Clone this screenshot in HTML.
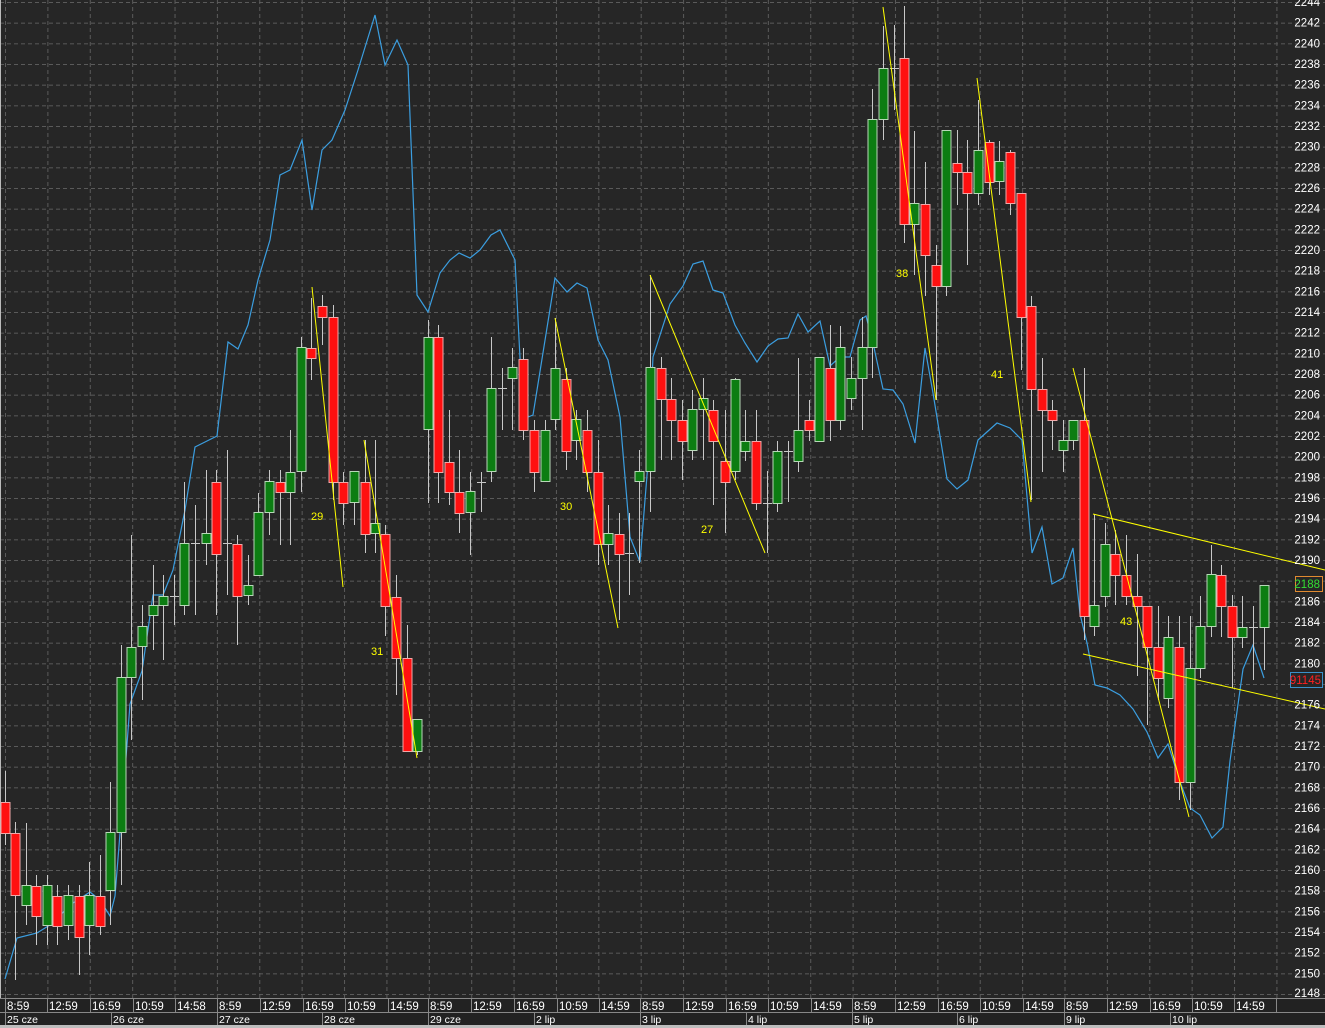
<!DOCTYPE html>
<html><head><meta charset="utf-8"><style>
html,body{margin:0;padding:0;background:#262626;width:1325px;height:1028px;overflow:hidden}
svg{display:block}
text{font-family:"Liberation Sans",sans-serif}
</style></head><body>
<svg width="1325" height="1028" viewBox="0 0 1325 1028" xmlns="http://www.w3.org/2000/svg">
<defs>
<pattern id="hg" x="0" y="2" width="1325" height="20.667" patternUnits="userSpaceOnUse">
<line x1="0" y1="0.5" x2="1325" y2="0.5" stroke="#5a5a5a" stroke-width="1" stroke-dasharray="4 3"/>
</pattern>
<pattern id="vg" x="5" y="0" width="42.38" height="1028" patternUnits="userSpaceOnUse">
<line x1="0.5" y1="0" x2="0.5" y2="1028" stroke="#5a5a5a" stroke-width="1" stroke-dasharray="4 3"/>
</pattern>
</defs>
<rect width="1325" height="1028" fill="#262626"/>
<rect x="0" y="0" width="1325" height="998" fill="url(#hg)"/>
<rect x="0" y="0" width="1290" height="998" fill="url(#vg)"/>
<line x1="0.5" y1="0" x2="0.5" y2="998" stroke="#bbb"/>

<!-- blue line -->
<polyline fill="none" stroke="#3b9ee0" stroke-width="1.2" points="5,979 17,938 37,933 53,923 70,905 90,892 100,900 110,916 115,896 125,771 130,704 142,671 153,595 163,595 173,570 185,510 195,447 217,436 228,342 238,349 248,325 258,280 270,240 280,175 290,170 302,140 312,210 322,150 332,140 345,110 358,70 375,15 385,65 397,40 408,65 417,295 428,312 440,273 450,260 459,253 470,258 480,250 491,235 500,230 510,250 515,260 520,358 528,417 533,415 555,278 567,292 577,283 587,288 598,340 608,360 620,417 630,537 640,562 648,463 653,357 670,304 683,286 693,264 703,261 713,290 723,293 735,325 745,343 757,362 768,346 778,339 788,338 798,314 808,332 820,321 830,366 840,357 850,357 860,320 866,316 873,343 883,389 893,390 903,404 915,443 925,348 933,393 947,479 957,489 968,480 978,440 997,423 1010,428 1022,440 1032,553 1042,527 1052,584 1063,578 1073,548 1080,614 1087,643 1095,685 1107,688 1120,695 1133,709 1147,732 1158,758 1168,744 1180,782 1190,808 1200,815 1212,838 1223,827 1230,761 1243,669 1253,645 1264,678"/>

<!-- wicks -->
<g stroke="#c8c8c8" stroke-width="1">
<line x1="5.5" y1="771" x2="5.5" y2="845"/><line x1="15.5" y1="822" x2="15.5" y2="980"/><line x1="26.5" y1="823" x2="26.5" y2="925"/><line x1="36.5" y1="875" x2="36.5" y2="945"/><line x1="47.5" y1="875" x2="47.5" y2="945"/><line x1="57.5" y1="885" x2="57.5" y2="945"/><line x1="68.5" y1="885" x2="68.5" y2="940"/><line x1="79.5" y1="885" x2="79.5" y2="975"/><line x1="89.5" y1="862" x2="89.5" y2="955"/><line x1="100.5" y1="855" x2="100.5" y2="935"/>
<line x1="110.5" y1="782" x2="110.5" y2="925"/><line x1="121.5" y1="645" x2="121.5" y2="885"/><line x1="131.5" y1="535" x2="131.5" y2="740"/><line x1="142.5" y1="605" x2="142.5" y2="700"/><line x1="153.5" y1="565" x2="153.5" y2="650"/><line x1="163.5" y1="575" x2="163.5" y2="660"/><line x1="174.5" y1="575" x2="174.5" y2="625"/><line x1="184.5" y1="482" x2="184.5" y2="615"/><line x1="195.5" y1="505" x2="195.5" y2="615"/><line x1="206.5" y1="470" x2="206.5" y2="565"/>
<line x1="216.5" y1="470" x2="216.5" y2="615"/><line x1="227.5" y1="450" x2="227.5" y2="595"/><line x1="237.5" y1="535" x2="237.5" y2="645"/><line x1="248.5" y1="555" x2="248.5" y2="605"/><line x1="258.5" y1="493" x2="258.5" y2="575"/><line x1="269.5" y1="470" x2="269.5" y2="535"/><line x1="280.5" y1="470" x2="280.5" y2="545"/><line x1="290.5" y1="430" x2="290.5" y2="545"/><line x1="301.5" y1="337" x2="301.5" y2="492"/><line x1="311.5" y1="298" x2="311.5" y2="380"/>
<line x1="322.5" y1="295" x2="322.5" y2="345"/><line x1="333.5" y1="305" x2="333.5" y2="500"/><line x1="343.5" y1="472" x2="343.5" y2="525"/><line x1="354.5" y1="471" x2="354.5" y2="525"/><line x1="365.5" y1="440" x2="365.5" y2="553"/><line x1="375.5" y1="440" x2="375.5" y2="553"/><line x1="385.5" y1="525" x2="385.5" y2="636"/><line x1="396.5" y1="575" x2="396.5" y2="695"/><line x1="407.5" y1="625" x2="407.5" y2="751"/><line x1="417.5" y1="719" x2="417.5" y2="755"/>
<line x1="428.5" y1="320" x2="428.5" y2="503"/><line x1="438.5" y1="325" x2="438.5" y2="503"/><line x1="449.5" y1="410" x2="449.5" y2="505"/><line x1="459.5" y1="450" x2="459.5" y2="533"/><line x1="470.5" y1="472" x2="470.5" y2="555"/><line x1="481.5" y1="472" x2="481.5" y2="512"/><line x1="491.5" y1="337" x2="491.5" y2="482"/><line x1="502.5" y1="368" x2="502.5" y2="430"/><line x1="512.5" y1="348" x2="512.5" y2="430"/><line x1="523.5" y1="348" x2="523.5" y2="440"/>
<line x1="534.5" y1="420" x2="534.5" y2="492"/><line x1="545.5" y1="420" x2="545.5" y2="482"/><line x1="555.5" y1="318" x2="555.5" y2="430"/><line x1="566.5" y1="368" x2="566.5" y2="470"/><line x1="576.5" y1="410" x2="576.5" y2="460"/><line x1="587.5" y1="410" x2="587.5" y2="492"/><line x1="598.5" y1="440" x2="598.5" y2="565"/><line x1="608.5" y1="505" x2="608.5" y2="565"/><line x1="619.5" y1="513" x2="619.5" y2="620"/><line x1="629.5" y1="513" x2="629.5" y2="595"/>
<line x1="639.5" y1="450" x2="639.5" y2="563"/><line x1="650.5" y1="275" x2="650.5" y2="512"/><line x1="661.5" y1="357" x2="661.5" y2="460"/><line x1="671.5" y1="378" x2="671.5" y2="460"/><line x1="682.5" y1="400" x2="682.5" y2="480"/><line x1="692.5" y1="390" x2="692.5" y2="460"/><line x1="703.5" y1="378" x2="703.5" y2="460"/><line x1="713.5" y1="400" x2="713.5" y2="505"/><line x1="725.5" y1="410" x2="725.5" y2="533"/><line x1="735.5" y1="378" x2="735.5" y2="480"/>
<line x1="745.5" y1="410" x2="745.5" y2="461"/><line x1="756.5" y1="410" x2="756.5" y2="510"/><line x1="767.5" y1="471" x2="767.5" y2="553"/><line x1="777.5" y1="441" x2="777.5" y2="512"/><line x1="788.5" y1="441" x2="788.5" y2="502"/><line x1="798.5" y1="358" x2="798.5" y2="472"/><line x1="809.5" y1="400" x2="809.5" y2="441"/><line x1="819.5" y1="357" x2="819.5" y2="441"/><line x1="830.5" y1="325" x2="830.5" y2="441"/><line x1="840.5" y1="326" x2="840.5" y2="430"/>
<line x1="851.5" y1="357" x2="851.5" y2="410"/><line x1="862.5" y1="317" x2="862.5" y2="430"/><line x1="872.5" y1="89" x2="872.5" y2="378"/><line x1="883.5" y1="26" x2="883.5" y2="140"/><line x1="894.5" y1="25" x2="894.5" y2="110"/><line x1="904.5" y1="6" x2="904.5" y2="243"/><line x1="914.5" y1="131" x2="914.5" y2="275"/><line x1="925.5" y1="162" x2="925.5" y2="296"/><line x1="936.5" y1="245" x2="936.5" y2="400"/><line x1="946.5" y1="130" x2="946.5" y2="296"/>
<line x1="957.5" y1="130" x2="957.5" y2="205"/><line x1="967.5" y1="140" x2="967.5" y2="265"/><line x1="978.5" y1="100" x2="978.5" y2="205"/><line x1="989.5" y1="140" x2="989.5" y2="195"/><line x1="999.5" y1="141" x2="999.5" y2="195"/><line x1="1010.5" y1="150" x2="1010.5" y2="215"/><line x1="1021.5" y1="193" x2="1021.5" y2="370"/><line x1="1031.5" y1="296" x2="1031.5" y2="500"/><line x1="1042.5" y1="358" x2="1042.5" y2="472"/><line x1="1052.5" y1="400" x2="1052.5" y2="450"/>
<line x1="1063.5" y1="420" x2="1063.5" y2="472"/><line x1="1073.5" y1="420" x2="1073.5" y2="450"/><line x1="1084.5" y1="368" x2="1084.5" y2="640"/><line x1="1094.5" y1="514" x2="1094.5" y2="636"/><line x1="1105.5" y1="523" x2="1105.5" y2="607"/><line x1="1115.5" y1="530" x2="1115.5" y2="605"/><line x1="1126.5" y1="535" x2="1126.5" y2="605"/><line x1="1137.5" y1="554" x2="1137.5" y2="676"/><line x1="1147.5" y1="606" x2="1147.5" y2="725"/><line x1="1158.5" y1="606" x2="1158.5" y2="700"/>
<line x1="1168.5" y1="616" x2="1168.5" y2="708"/><line x1="1179.5" y1="616" x2="1179.5" y2="800"/><line x1="1190.5" y1="616" x2="1190.5" y2="810"/><line x1="1200.5" y1="596" x2="1200.5" y2="678"/><line x1="1211.5" y1="545" x2="1211.5" y2="637"/><line x1="1221.5" y1="565" x2="1221.5" y2="637"/><line x1="1232.5" y1="595" x2="1232.5" y2="688"/><line x1="1242.5" y1="596" x2="1242.5" y2="648"/><line x1="1253.5" y1="606" x2="1253.5" y2="680"/><line x1="1264.5" y1="585" x2="1264.5" y2="670"/>
<!-- flats -->
<line x1="170" y1="596.5" x2="179" y2="596.5"/><line x1="191" y1="543.5" x2="200" y2="543.5"/><line x1="223" y1="543.5" x2="232" y2="543.5"/><line x1="477" y1="482.5" x2="486" y2="482.5"/><line x1="498" y1="388.5" x2="507" y2="388.5"/><line x1="625" y1="553.5" x2="634" y2="553.5"/><line x1="763" y1="503.5" x2="772" y2="503.5"/><line x1="784" y1="451.5" x2="793" y2="451.5"/><line x1="890" y1="68.5" x2="899" y2="68.5"/><line x1="1249" y1="627.5" x2="1258" y2="627.5"/>
</g>

<!-- red bodies -->
<g fill="#ff1010" stroke="#f0a8a8" stroke-width="1">
<rect x="1" y="802.5" width="9" height="31"/><rect x="11" y="833.5" width="9" height="62"/><rect x="32" y="886.5" width="9" height="30"/><rect x="53" y="896.5" width="9" height="30"/><rect x="75" y="896.5" width="9" height="41"/><rect x="96" y="896.5" width="9" height="30"/>
<rect x="212" y="482.5" width="9" height="72"/><rect x="233" y="544.5" width="9" height="52"/><rect x="276" y="482.5" width="9" height="10"/><rect x="307" y="348.5" width="9" height="10"/><rect x="318" y="306.5" width="9" height="11"/><rect x="329" y="317.5" width="9" height="165"/><rect x="339" y="482.5" width="9" height="21"/><rect x="361" y="482.5" width="9" height="52"/><rect x="381" y="534.5" width="9" height="72"/><rect x="392" y="597.5" width="9" height="61"/><rect x="403" y="658.5" width="9" height="93"/>
<rect x="434" y="337.5" width="9" height="135"/><rect x="445" y="462.5" width="9" height="30"/><rect x="455" y="492.5" width="9" height="21"/><rect x="519" y="359.5" width="9" height="71"/><rect x="530" y="430.5" width="9" height="42"/><rect x="562" y="379.5" width="9" height="72"/><rect x="583" y="430.5" width="9" height="42"/><rect x="594" y="472.5" width="9" height="72"/><rect x="615" y="534.5" width="9" height="20"/>
<rect x="657" y="368.5" width="9" height="31"/><rect x="667" y="399.5" width="9" height="21"/><rect x="678" y="420.5" width="9" height="21"/><rect x="709" y="410.5" width="9" height="31"/><rect x="721" y="461.5" width="9" height="21"/><rect x="752" y="441.5" width="9" height="62"/><rect x="805" y="420.5" width="9" height="10"/><rect x="826" y="368.5" width="9" height="52"/>
<rect x="900" y="58.5" width="9" height="166"/><rect x="921" y="204.5" width="9" height="51"/><rect x="932" y="265.5" width="9" height="21"/><rect x="953" y="163.5" width="9" height="9"/><rect x="963" y="172.5" width="9" height="21"/><rect x="985" y="142.5" width="9" height="40"/><rect x="1006" y="152.5" width="9" height="51"/><rect x="1017" y="193.5" width="9" height="124"/><rect x="1027" y="306.5" width="9" height="83"/><rect x="1038" y="389.5" width="9" height="21"/><rect x="1048" y="410.5" width="9" height="10"/>
<rect x="1080" y="420.5" width="9" height="196"/><rect x="1111" y="554.5" width="9" height="21"/><rect x="1122" y="575.5" width="9" height="21"/><rect x="1133" y="596.5" width="9" height="10"/><rect x="1143" y="606.5" width="9" height="41"/><rect x="1154" y="647.5" width="9" height="31"/><rect x="1175" y="647.5" width="9" height="135"/><rect x="1217" y="575.5" width="9" height="31"/><rect x="1228" y="606.5" width="9" height="31"/>
</g>
<!-- green bodies -->
<g fill="#0c7d12" stroke="#b8d8b8" stroke-width="1">
<rect x="22" y="885.5" width="9" height="20"/><rect x="43" y="885.5" width="9" height="40"/><rect x="64" y="895.5" width="9" height="30"/><rect x="85" y="895.5" width="9" height="30"/><rect x="106" y="832.5" width="9" height="58"/><rect x="117" y="677.5" width="9" height="155"/><rect x="127" y="647.5" width="9" height="30"/><rect x="138" y="626.5" width="9" height="20"/><rect x="149" y="605.5" width="9" height="10"/><rect x="159" y="596.5" width="9" height="9"/><rect x="180" y="543.5" width="9" height="62"/><rect x="202" y="533.5" width="9" height="10"/>
<rect x="244" y="585.5" width="9" height="10"/><rect x="254" y="512.5" width="9" height="63"/><rect x="265" y="481.5" width="9" height="31"/><rect x="286" y="472.5" width="9" height="20"/><rect x="297" y="347.5" width="9" height="124"/><rect x="350" y="471.5" width="9" height="31"/><rect x="371" y="523.5" width="9" height="10"/><rect x="413" y="719.5" width="9" height="32"/>
<rect x="424" y="337.5" width="9" height="92"/><rect x="466" y="491.5" width="9" height="21"/><rect x="487" y="388.5" width="9" height="83"/><rect x="508" y="367.5" width="9" height="11"/><rect x="541" y="430.5" width="9" height="51"/><rect x="551" y="368.5" width="9" height="51"/><rect x="572" y="419.5" width="9" height="21"/><rect x="604" y="533.5" width="9" height="11"/><rect x="635" y="471.5" width="9" height="10"/><rect x="646" y="367.5" width="9" height="104"/>
<rect x="688" y="409.5" width="9" height="41"/><rect x="699" y="398.5" width="9" height="11"/><rect x="731" y="379.5" width="9" height="92"/><rect x="741" y="441.5" width="9" height="10"/><rect x="773" y="451.5" width="9" height="52"/><rect x="794" y="430.5" width="9" height="31"/><rect x="815" y="357.5" width="9" height="84"/><rect x="836" y="347.5" width="9" height="73"/><rect x="847" y="378.5" width="9" height="20"/><rect x="858" y="347.5" width="9" height="31"/><rect x="868" y="119.5" width="9" height="228"/><rect x="879" y="68.5" width="9" height="51"/>
<rect x="910" y="203.5" width="9" height="21"/><rect x="942" y="130.5" width="9" height="156"/><rect x="974" y="150.5" width="9" height="43"/><rect x="995" y="161.5" width="9" height="20"/><rect x="1059" y="440.5" width="9" height="10"/><rect x="1069" y="420.5" width="9" height="20"/><rect x="1090" y="605.5" width="9" height="21"/><rect x="1101" y="544.5" width="9" height="52"/><rect x="1164" y="637.5" width="9" height="61"/><rect x="1186" y="668.5" width="9" height="114"/><rect x="1196" y="626.5" width="9" height="42"/><rect x="1207" y="574.5" width="9" height="52"/><rect x="1238" y="627.5" width="9" height="10"/><rect x="1260" y="585.5" width="9" height="42"/>
</g>

<!-- yellow lines -->
<g stroke="#ffff00" stroke-width="1" fill="none">
<line x1="312" y1="287" x2="343" y2="587"/>
<line x1="364" y1="440" x2="417" y2="758"/>
<line x1="555" y1="318" x2="618" y2="628"/>
<line x1="650" y1="275" x2="765" y2="553"/>
<line x1="883" y1="7" x2="936" y2="400"/>
<line x1="977" y1="78" x2="1031" y2="502"/>
<line x1="1073" y1="368" x2="1189" y2="817"/>
<line x1="1093" y1="514" x2="1325" y2="570"/>
<line x1="1083" y1="654" x2="1325" y2="709"/>
</g>
<g fill="#ffff00" font-size="11">
<text x="311" y="520">29</text><text x="371" y="655">31</text><text x="560" y="510">30</text><text x="701" y="533">27</text><text x="896" y="277">38</text><text x="991" y="378">41</text><text x="1120" y="625">43</text>
</g>

<!-- right axis labels -->
<g fill="#ffffff" font-size="11.5" text-anchor="end">
<text x="1320" y="6">2244</text><text x="1320" y="26.7">2242</text><text x="1320" y="47.3">2240</text><text x="1320" y="68">2238</text><text x="1320" y="88.7">2236</text><text x="1320" y="109.3">2234</text><text x="1320" y="130">2232</text><text x="1320" y="150.7">2230</text><text x="1320" y="171.3">2228</text><text x="1320" y="192">2226</text><text x="1320" y="212.7">2224</text><text x="1320" y="233.3">2222</text><text x="1320" y="254">2220</text><text x="1320" y="274.7">2218</text><text x="1320" y="295.3">2216</text><text x="1320" y="316">2214</text><text x="1320" y="336.7">2212</text><text x="1320" y="357.3">2210</text><text x="1320" y="378">2208</text><text x="1320" y="398.7">2206</text><text x="1320" y="419.3">2204</text><text x="1320" y="440">2202</text><text x="1320" y="460.7">2200</text><text x="1320" y="481.3">2198</text><text x="1320" y="502">2196</text><text x="1320" y="522.7">2194</text><text x="1320" y="543.3">2192</text><text x="1320" y="564">2190</text><text x="1320" y="605.3">2186</text><text x="1320" y="626">2184</text><text x="1320" y="646.7">2182</text><text x="1320" y="667.3">2180</text><text x="1320" y="708.7">2176</text><text x="1320" y="729.3">2174</text><text x="1320" y="750">2172</text><text x="1320" y="770.7">2170</text><text x="1320" y="791.3">2168</text><text x="1320" y="812">2166</text><text x="1320" y="832.7">2164</text><text x="1320" y="853.3">2162</text><text x="1320" y="874">2160</text><text x="1320" y="894.7">2158</text><text x="1320" y="915.3">2156</text><text x="1320" y="936">2154</text><text x="1320" y="956.7">2152</text><text x="1320" y="977.3">2150</text><text x="1320" y="997">2148</text>
</g>
<rect x="1295.5" y="576.5" width="27" height="15" fill="#262626" stroke="#e08a30"/>
<text x="1320" y="588" fill="#33dd33" font-size="11.5" text-anchor="end">2188</text>
<rect x="1290.5" y="672.5" width="32" height="15" fill="#262626" stroke="#3a90c8"/>
<text x="1321" y="684" fill="#ff2020" font-size="11.5" text-anchor="end">91145</text>

<!-- bottom axis -->
<rect x="0" y="998" width="1325" height="30" fill="#222"/>
<line x1="0" y1="998.5" x2="1325" y2="998.5" stroke="#888"/>
<line x1="0" y1="1012.5" x2="1325" y2="1012.5" stroke="#888"/>
<rect x="0" y="1025" width="1325" height="3" fill="#bdbdbd"/>
<g stroke="#888">
<line x1="5.5" y1="999" x2="5.5" y2="1025"/><line x1="47.5" y1="999" x2="47.5" y2="1012"/><line x1="90.5" y1="999" x2="90.5" y2="1012"/><line x1="133.5" y1="999" x2="133.5" y2="1012"/><line x1="175.5" y1="999" x2="175.5" y2="1012"/><line x1="217.5" y1="999" x2="217.5" y2="1025"/><line x1="260.5" y1="999" x2="260.5" y2="1012"/><line x1="303.5" y1="999" x2="303.5" y2="1012"/><line x1="345.5" y1="999" x2="345.5" y2="1012"/><line x1="388.5" y1="999" x2="388.5" y2="1012"/><line x1="428.5" y1="999" x2="428.5" y2="1025"/><line x1="471.5" y1="999" x2="471.5" y2="1012"/><line x1="514.5" y1="999" x2="514.5" y2="1012"/><line x1="557.5" y1="999" x2="557.5" y2="1012"/><line x1="599.5" y1="999" x2="599.5" y2="1012"/><line x1="640.5" y1="999" x2="640.5" y2="1025"/><line x1="683.5" y1="999" x2="683.5" y2="1012"/><line x1="726.5" y1="999" x2="726.5" y2="1012"/><line x1="768.5" y1="999" x2="768.5" y2="1012"/><line x1="811.5" y1="999" x2="811.5" y2="1012"/><line x1="852.5" y1="999" x2="852.5" y2="1025"/><line x1="895.5" y1="999" x2="895.5" y2="1012"/><line x1="938.5" y1="999" x2="938.5" y2="1012"/><line x1="980.5" y1="999" x2="980.5" y2="1012"/><line x1="1023.5" y1="999" x2="1023.5" y2="1012"/><line x1="1064.5" y1="999" x2="1064.5" y2="1025"/><line x1="1107.5" y1="999" x2="1107.5" y2="1012"/><line x1="1150.5" y1="999" x2="1150.5" y2="1012"/><line x1="1192.5" y1="999" x2="1192.5" y2="1012"/><line x1="1234.5" y1="999" x2="1234.5" y2="1012"/><line x1="1276.5" y1="999" x2="1276.5" y2="1012"/>
<line x1="111.5" y1="1013" x2="111.5" y2="1025"/><line x1="322.5" y1="1013" x2="322.5" y2="1025"/><line x1="534.5" y1="1013" x2="534.5" y2="1025"/><line x1="746.5" y1="1013" x2="746.5" y2="1025"/><line x1="957.5" y1="1013" x2="957.5" y2="1025"/><line x1="1170.5" y1="1013" x2="1170.5" y2="1025"/>
</g>
<g fill="#fff" font-size="11.5">
<text x="7" y="1010">8:59</text><text x="49" y="1010">12:59</text><text x="92" y="1010">16:59</text><text x="135" y="1010">10:59</text><text x="177" y="1010">14:58</text><text x="219" y="1010">8:59</text><text x="262" y="1010">12:59</text><text x="305" y="1010">16:59</text><text x="347" y="1010">10:59</text><text x="390" y="1010">14:59</text><text x="430" y="1010">8:59</text><text x="473" y="1010">12:59</text><text x="516" y="1010">16:59</text><text x="559" y="1010">10:59</text><text x="601" y="1010">14:59</text><text x="642" y="1010">8:59</text><text x="685" y="1010">12:59</text><text x="728" y="1010">16:59</text><text x="770" y="1010">10:59</text><text x="813" y="1010">14:59</text><text x="854" y="1010">8:59</text><text x="897" y="1010">12:59</text><text x="940" y="1010">16:59</text><text x="982" y="1010">10:59</text><text x="1025" y="1010">14:59</text><text x="1066" y="1010">8:59</text><text x="1109" y="1010">12:59</text><text x="1152" y="1010">16:59</text><text x="1194" y="1010">10:59</text><text x="1236" y="1010">14:59</text>
</g>
<g fill="#fff" font-size="10.5">
<text x="7" y="1023">25 cze</text><text x="113" y="1023">26 cze</text><text x="219" y="1023">27 cze</text><text x="324" y="1023">28 cze</text><text x="430" y="1023">29 cze</text><text x="536" y="1023">2 lip</text><text x="642" y="1023">3 lip</text><text x="748" y="1023">4 lip</text><text x="854" y="1023">5 lip</text><text x="959" y="1023">6 lip</text><text x="1066" y="1023">9 lip</text><text x="1172" y="1023">10 lip</text>
</g>
</svg>
</body></html>
